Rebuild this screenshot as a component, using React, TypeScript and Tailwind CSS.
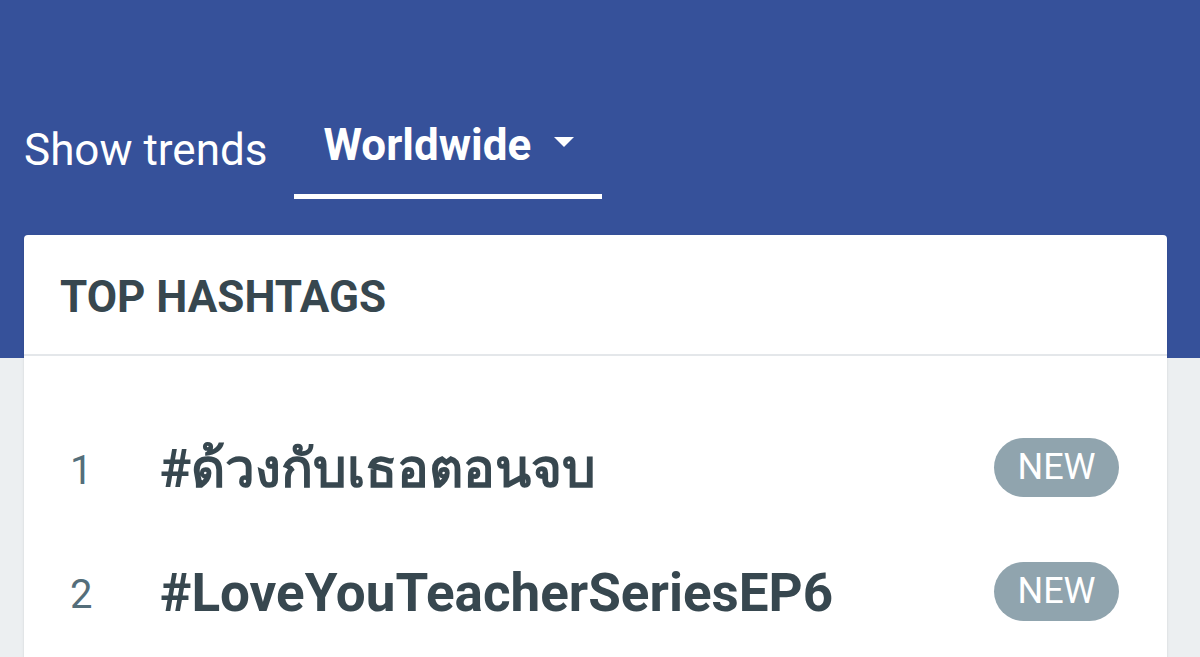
import React from "react";

interface Trend {
  rank: number;
  tag: string;
  isNew?: boolean;
}

const trends: Trend[] = [
  { rank: 1, tag: "#ด้วงกับเธอตอนจบ", isNew: true },
  { rank: 2, tag: "#LoveYouTeacherSeriesEP6", isNew: true },
];

const Caret = () => (
  <svg width="20" height="10" viewBox="0 0 20 10" className="ml-[23px] mb-[6px]">
    <path d="M0 0h20L10 10z" fill="#ffffff" />
  </svg>
);

const TrendRow: React.FC<{ trend: Trend }> = ({ trend }) => (
  <div className="flex items-center h-[124px] pl-[46px] pr-[48px]">
    <span className="w-[90px] pt-[8px] text-[40px] text-[#546e7a]">{trend.rank}</span>
    <span className="flex-1 pt-[5px] text-[53px] font-bold text-[#37474f] truncate">
      {trend.tag}
    </span>
    {trend.isNew && (
      <span className="flex items-center justify-center w-[125px] h-[59px] rounded-full bg-[#90a4ae] text-white text-[36px]">
        NEW
      </span>
    )}
  </div>
);

export default function App() {
  return (
    <div
      className="w-[1200px] h-[657px] overflow-hidden bg-[linear-gradient(to_bottom,#36519a_358px,#eceff1_358px)]"
      style={{ fontFamily: "Roboto, 'Noto Sans', 'DejaVu Sans', sans-serif" }}
    >
      <nav className="flex items-end h-[199px] pl-[24px]">
        <span className="text-[44px] text-white mb-[27px] leading-none">Show trends</span>
        <div className="flex items-center ml-[27px] pl-[29px] pr-[28px] pb-[27px] border-b-[5px] border-white">
          <span className="text-[44px] font-bold text-white leading-none">Worldwide</span>
          <Caret />
        </div>
      </nav>

      <div className="ml-[24px] mt-[36px] w-[1143px] pb-[120px] bg-white rounded-[4px] shadow-sm">
        <div className="flex items-center h-[121px] px-[36px] border-b-2 border-[#e4e7ea]">
          <h2 className="text-[44px] font-bold text-[#37474f] leading-none mt-[4px]">TOP HASHTAGS</h2>
        </div>
        <div className="pt-[49px]">
          {trends.map((t) => (
            <TrendRow key={t.rank} trend={t} />
          ))}
        </div>
      </div>
    </div>
  );
}
